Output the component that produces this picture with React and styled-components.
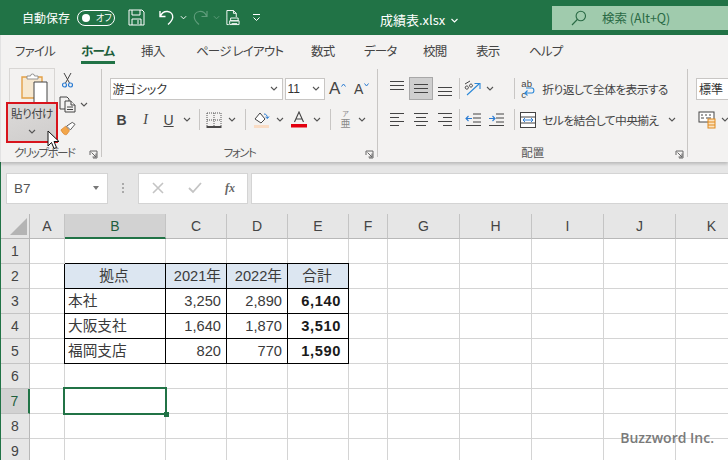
import React from "react";
import styled, { createGlobalStyle } from "styled-components";

const GREEN = "#217346";
const FONT = `"Liberation Sans", "Noto Sans CJK JP", sans-serif`;
const UI_FONT = `"Noto Sans CJK JP", "Liberation Sans", sans-serif`;

const GlobalStyle = createGlobalStyle`
  html, body {
    margin: 0;
    padding: 0;
    width: 728px;
    height: 460px;
    overflow: hidden;
    background: #fff;
  }
`;

const Page = styled.div`
  position: relative;
  width: 728px;
  height: 460px;
  overflow: hidden;
  font-family: ${UI_FONT};
  font-feature-settings: "palt";
`;

/* title bar */
const TitleBar = styled.div`
  height: 35px;
  background: ${GREEN};
  display: flex;
  align-items: center;
  color: #fff;
`;
const AutoSave = styled.span`
  font-size: 12px;
  margin-left: 22px;
  width: 55px;
  line-height: 35px;
`;
const Toggle = styled.div`
  box-sizing: border-box;
  width: 38px;
  height: 16px;
  border: 1px solid #fff;
  border-radius: 8px;
  display: flex;
  align-items: center;
  padding-left: 4px;
  gap: 6px;
  font-size: 9px;
  line-height: 1;
`;
const ToggleKnob = styled.i`
  width: 8px;
  height: 8px;
  border-radius: 50%;
  background: #fff;
`;
const QuickIcons = styled.div`
  display: flex;
  align-items: center;
  margin-left: 13px;
`;
const QuickSlot = styled.div`
  width: ${(p) => p.$w}px;
  display: flex;
  justify-content: center;
`;
const FileName = styled.div`
  position: absolute;
  left: 380px;
  top: 10px;
  font-size: 13px;
  line-height: 20px;
  display: flex;
  align-items: center;
  gap: 5px;
`;
const Search = styled.div`
  margin-left: auto;
  width: 176px;
  height: 24px;
  background: #a0cbad;
  display: flex;
  align-items: center;
  color: #2a6a45;
  font-size: 12.5px;
  padding-left: 19px;
  box-sizing: border-box;
  gap: 15px;
`;

/* tabs */
const Chrome = styled.div`
  background: #f3f2f1;
  border-left: 1px solid #e2e2e2;
  box-shadow: 0 2px 3px rgba(0, 0, 0, 0.2);
  position: relative;
  z-index: 2;
`;
const Tabs = styled.div`
  height: 30px;
  display: flex;
  padding-left: 14px;
  font-size: 12.5px;
  letter-spacing: -0.8px;
  line-height: 32px;
  color: #444;
`;
const Tab = styled.div`
  position: relative;
  width: ${(p) => p.$w}px;
  flex: none;
  white-space: nowrap;
  font-weight: ${(p) => (p.$active ? 700 : 400)};
  color: ${(p) => (p.$active ? "#1f5f3c" : "#444")};
  &::after {
    content: "";
    display: ${(p) => (p.$active ? "block" : "none")};
    position: absolute;
    left: 0;
    width: 34px;
    top: 26px;
    height: 2.5px;
    background: ${GREEN};
  }
`;

/* ribbon */
const Ribbon = styled.div`
  height: 97px;
  display: flex;
`;
const Group = styled.div`
  position: relative;
  box-sizing: border-box;
  width: ${(p) => p.$w}px;
  border-right: ${(p) => (p.$last ? "none" : "1px solid #c8c6c4")};
  margin-top: 4px;
  height: 88px;
`;
const GroupLabel = styled.div`
  position: absolute;
  left: 0;
  right: ${(p) => p.$right || 0}px;
  top: 75px;
  text-align: center;
  font-size: 11.5px;
  letter-spacing: ${(p) => (p.$tight ? "-1.5px" : "0")};
  line-height: 16px;
  color: #555;
`;
const Launcher = styled.svg`
  position: absolute;
  right: 3px;
  top: 81px;
`;
const ClipboardBody = styled.div`
  display: flex;
`;
const PasteColumn = styled.div`
  width: 52px;
  margin: -1px 0 0 5px;
  display: flex;
  flex-direction: column;
  align-items: center;
`;
const PasteTop = styled.div`
  box-sizing: border-box;
  width: 46px;
  height: 34px;
  border: 1px solid #d8d6d4;
  border-bottom: none;
  display: flex;
  justify-content: center;
  padding: 3px 0 0 5px;
`;
const PasteBottom = styled.div`
  box-sizing: border-box;
  width: 52px;
  height: 41px;
  border: 2px solid #d8141c;
  background: linear-gradient(160deg, #dcdad9, #cfcdcc);
  font-size: 11.5px;
  letter-spacing: -0.5px;
  line-height: 16px;
  color: #444;
  text-align: center;
  padding-top: 1px;
  white-space: nowrap;
`;
const ClipTools = styled.div`
  display: flex;
  flex-direction: column;
  margin: -1px 0 0 1px;
`;
const ClipTool = styled.div`
  height: 24px;
  display: flex;
  align-items: center;
  gap: 4px;
`;
const ClipIcon = styled.div`
  width: 17px;
  display: flex;
  justify-content: center;
`;
const Cursor = styled.svg`
  position: absolute;
  left: 46px;
  top: 61px;
`;

const RibbonRows = styled.div`
  display: flex;
  flex-direction: column;
  padding: 8px 0 0 ${(p) => p.$pad}px;
`;
const RibbonRow = styled.div`
  height: 23px;
  display: flex;
  align-items: center;
  margin-bottom: 8px;
`;
const Slot = styled.div`
  width: ${(p) => p.$w}px;
  height: 23px;
  flex: none;
  display: flex;
  align-items: center;
  justify-content: center;
  box-sizing: border-box;
  background: ${(p) => (p.$on ? "#cfcfcf" : "transparent")};
  border: ${(p) => (p.$on ? "1px solid #a8a8a8" : "none")};
  font-family: ${(p) => (p.$serif ? '"Liberation Serif", serif' : FONT)};
  font-weight: ${(p) => (p.$bold ? 700 : 400)};
  font-style: ${(p) => (p.$italic ? "italic" : "normal")};
  text-decoration: ${(p) => (p.$under ? "underline" : "none")};
  font-size: 14px;
  color: #444;
`;
const VSep = styled.div`
  width: 1px;
  height: 21px;
  flex: none;
  background: #c8c6c4;
  margin: 0 ${(p) => p.$m || 0}px;
`;
const Combo = styled.div`
  box-sizing: border-box;
  width: ${(p) => p.$w}px;
  height: 22px;
  flex: none;
  margin-right: 2px;
  background: #fff;
  border: 1px solid #c8c6c4;
  display: flex;
  align-items: center;
  justify-content: space-between;
  padding: 0 4px 0 2px;
  font-size: 12px;
  color: #333;
  font-family: ${FONT};
`;
const GrowA = styled.span`
  font-family: ${FONT};
  font-size: ${(p) => p.$size}px;
  color: #444;
  line-height: 1;
`;
const GrowMark = styled.svg`
  margin: -8px 0 0 1px;
  flex: none;
`;
const PhoneticMark = styled.div`
  display: flex;
  flex-direction: column;
  align-items: center;
  font-family: ${FONT};
  color: #8a8a8a;
  & > span:first-child {
    font-size: 7px;
    line-height: 8px;
  }
  & > span:last-child {
    font-size: 10px;
    line-height: 12px;
  }
`;
const TextAction = styled.div`
  font-size: 11.8px;
  letter-spacing: -0.65px;
  line-height: 23px;
  color: #444;
  white-space: nowrap;
  flex: none;
  margin-left: 4px;
`;
const WrapMark = styled.div`
  position: relative;
  width: 14px;
  font-family: ${FONT};
  font-size: 9.5px;
  line-height: 11px;
  color: #444;
  & > svg {
    position: absolute;
    left: 3px;
    top: 9px;
  }
`;

/* formula bar */
const FormulaBar = styled.div`
  height: 52px;
  background: #e6e6e6;
  border-left: 1px solid ${GREEN};
  display: flex;
  align-items: center;
  padding: 0 0 0 5px;
`;
const NameBox = styled.div`
  box-sizing: border-box;
  width: 102px;
  height: 31px;
  background: #fff;
  border: 1px solid #d4d4d4;
  display: flex;
  align-items: center;
  justify-content: space-between;
  padding: 0 8px 0 7px;
  font-family: ${FONT};
  font-size: 13.5px;
  color: #555;
`;
const Triangle = styled.i`
  border-left: 3.5px solid transparent;
  border-right: 3.5px solid transparent;
  border-top: 4px solid #777;
`;
const Grip = styled.div`
  width: 30px;
  display: flex;
  flex-direction: column;
  align-items: center;
  gap: 2px;
  & > i {
    width: 2px;
    height: 2px;
    background: #aaa;
  }
`;
const FxBox = styled.div`
  box-sizing: border-box;
  width: 110px;
  height: 31px;
  background: #fff;
  border: 1px solid #d4d4d4;
  display: flex;
  align-items: center;
  justify-content: space-between;
  padding: 0 12px 0 13px;
`;
const FxLabel = styled.span`
  font-family: "Liberation Serif", serif;
  font-style: italic;
  font-weight: 700;
  font-size: 12px;
  color: #666;
`;
const FormulaInput = styled.div`
  box-sizing: border-box;
  flex: 1;
  margin-left: 3px;
  height: 31px;
  background: #fff;
  border: 1px solid #d4d4d4;
  border-right: none;
`;

/* sheet */
const Sheet = styled.div`
  border-left: 1px solid ${GREEN};
  display: grid;
  grid-template-columns: 29px 35px 101px 61px 61px 61px 39px 72px 72px 72px 72px 72px;
  grid-template-rows: 25px repeat(9, 25px);
  font-family: ${FONT};
  background: #fff;
`;
const Corner = styled.div`
  background: #e6e6e6;
  border-right: 1px solid #b8b8b8;
  border-bottom: 1px solid #b8b8b8;
  display: flex;
  align-items: flex-end;
  justify-content: flex-end;
  padding: 0 2px 3px 0;
`;
const ColHead = styled.div`
  box-sizing: border-box;
  background: ${(p) => (p.$on ? "#d2d2d2" : "#e6e6e6")};
  border-right: 1px solid #c4c4c4;
  border-bottom: ${(p) => (p.$on ? `2px solid ${GREEN}` : "1px solid #b8b8b8")};
  display: flex;
  align-items: center;
  justify-content: center;
  font-size: 14px;
  color: ${(p) => (p.$on ? "#1f5f3c" : "#444")};
`;
const RowHead = styled.div`
  box-sizing: border-box;
  background: ${(p) => (p.$on ? "#d2d2d2" : "#e6e6e6")};
  border-right: ${(p) => (p.$on ? `2px solid ${GREEN}` : "1px solid #b8b8b8")};
  border-bottom: 1px solid #c4c4c4;
  display: flex;
  align-items: center;
  justify-content: center;
  font-size: 14px;
  color: ${(p) => (p.$on ? "#1f5f3c" : "#444")};
`;
const Cell = styled.div`
  box-sizing: border-box;
  min-width: 0;
  border-right: 1px solid #d4d4d4;
  border-bottom: 1px solid #d4d4d4;
`;
const DataCell = styled.div`
  box-sizing: border-box;
  min-width: 0;
  border-right: 1px solid #000;
  border-bottom: 1px solid #000;
  box-shadow: -1px 0 0 #000, 0 -1px 0 #000;
  background: ${(p) => (p.$head ? "#dce6f1" : "#fff")};
  text-align: ${(p) => p.$align};
  font-weight: ${(p) => (p.$bold ? 700 : 400)};
  font-feature-settings: normal;
  font-size: 14.67px;
  letter-spacing: ${(p) => (p.$bold ? "0.6px" : "0")};
  line-height: 24px;
  padding: 0 ${(p) => (p.$bold ? 7 : 5)}px 0 3px;
  color: ${(p) => (p.$bold ? "#1a1a1a" : "#3a3a3a")};
  white-space: nowrap;
`;
const SelectedCell = styled(Cell)`
  position: relative;
  &::before {
    content: "";
    position: absolute;
    left: -2px;
    top: -2px;
    right: -2px;
    bottom: -2px;
    border: 2px solid ${GREEN};
  }
  &::after {
    content: "";
    position: absolute;
    right: -4px;
    bottom: -4px;
    width: 5px;
    height: 5px;
    background: ${GREEN};
  }
`;
const Watermark = styled.div`
  position: absolute;
  right: 14px;
  bottom: 13px;
  font-family: "Open Sans", sans-serif;
  font-weight: 600;
  font-size: 14px;
  line-height: 18px;
  color: #7a7a7a;
`;

const Chevron = ({ color = "#555", w = 8 }) => (
  <svg width={w} height="5" viewBox="0 0 8 5" style={{ flex: "none" }}>
    <path d="M1 1l3 3 3-3" fill="none" stroke={color} strokeWidth="1.1" />
  </svg>
);

const SaveIcon = () => (
  <svg width="17" height="17" viewBox="0 0 17 17" fill="none" stroke="#fff" strokeWidth="1">
    <path d="M1 1h13l2 2v13H1z" />
    <path d="M4 1v5h8V1M4 16v-6h9v6M10 11v4" />
  </svg>
);
const UndoIcon = ({ color = "#fff" }) => (
  <svg width="16" height="17" viewBox="0 0 16 17" fill="none" stroke={color} strokeWidth="1.4">
    <path d="M1 2v5.5h5.5M1.5 7C3 3.5 5.5 2.2 8.5 2.5c3.5.4 5.5 3 5.2 6-.3 3-2.4 5-4.7 7" />
  </svg>
);
const RedoIcon = () => (
  <svg width="16" height="17" viewBox="0 0 16 17" fill="none" stroke="#5f9c7b" strokeWidth="1.2">
    <path d="M15 2v5.5H9.5M14.5 7C13 3.5 10.5 2.2 7.5 2.5c-3.5.4-5.5 3-5.2 6 .3 3 2.4 5 4.7 7" />
  </svg>
);
const PreviewIcon = () => (
  <svg width="16" height="18" viewBox="0 0 16 18" fill="none" stroke="#fff" strokeWidth="1">
    <path d="M2 8V1h7l3 3v4M9 1v3h3" />
    <path d="M2 8v8h2M6 9h8v3H6zM5 12h10v4H5zM7 15h6" />
  </svg>
);
const CustomizeIcon = () => (
  <svg width="9" height="9" viewBox="0 0 9 9" fill="none" stroke="#fff" strokeWidth="1">
    <path d="M1 1.5h7M1.5 4.5l3 3 3-3" />
  </svg>
);
const SearchIcon = () => (
  <svg width="16" height="16" viewBox="0 0 16 16" fill="none" stroke="#2a6a45" strokeWidth="1.1">
    <circle cx="9.8" cy="6" r="4.7" />
    <path d="M6.3 9.5L1 15" />
  </svg>
);

const PasteIcon = () => (
  <svg width="30" height="31" viewBox="0 0 30 31">
    <path d="M2 26V5h20v21z" fill="#f7e8cf" stroke="#e3a046" strokeWidth="1.4" />
    <path d="M7 7V4h3.5a2 2 0 0 1 4 0H18v3z" fill="#fff" stroke="#8a8a8a" strokeWidth="0.9" />
    <path d="M14 10h13v21H14z" fill="#fff" stroke="#444" strokeWidth="1" />
  </svg>
);
const ScissorsIcon = () => (
  <svg width="11" height="16" viewBox="0 0 11 16" fill="none">
    <path d="M2 1l5.500 10M9 1L3.500 11" stroke="#444" strokeWidth="1" />
    <circle cx="2.500" cy="13" r="2" stroke="#2b7cd3" strokeWidth="1.2" />
    <circle cx="8.500" cy="13" r="2" stroke="#2b7cd3" strokeWidth="1.2" />
  </svg>
);
const CopyIcon = () => (
  <svg width="17" height="17" viewBox="0 0 17 17" fill="#f3f2f1" stroke="#444" strokeWidth="1">
    <path d="M1 1h7l2 2v10H1z" />
    <path d="M6 5h6l4 4v7H6z" />
    <path d="M12 5v4h4M8 11h6M8 13.500h6" />
  </svg>
);
const BrushIcon = () => (
  <svg width="16" height="15" viewBox="0 0 17 15">
    <path d="M1 9l5-4 4 5-3 4c-2 .5-4-1-6-5z" fill="#f2a64a" stroke="#d9822b" strokeWidth="0.8" />
    <path d="M7 5l6-4 3 2-5 6z" fill="#fff" stroke="#555" strokeWidth="1" />
  </svg>
);

const BorderIcon = () => (
  <svg width="16" height="16" viewBox="0 0 16 16" fill="none">
    <path d="M1 1h14M1 1v14M15 1v14M8 1v14M1 8h14" stroke="#555" strokeWidth="1" strokeDasharray="1 1" />
    <path d="M0.500 15h15" stroke="#000" strokeWidth="1.400" />
  </svg>
);
const FillIcon = () => (
  <svg width="17" height="17" viewBox="0 0 17 17" fill="none">
    <path d="M2 8l5-6 5 6-4 4z" stroke="#444" strokeWidth="1" fill="#fff" />
    <path d="M11 3c2 0 3 1 3.500 4M12.500 6l2 1.500L16 5.500" stroke="#2b7cd3" strokeWidth="1" />
    <rect x="1" y="14" width="15" height="3" fill="#f9dcc4" />
  </svg>
);
const FontColorIcon = () => (
  <svg width="16" height="17" viewBox="0 0 16 17" fill="none">
    <path d="M3.500 11L8 1l4.500 10M5 8h6" stroke="#444" strokeWidth="1.100" />
    <rect x="0" y="13" width="16" height="3.500" fill="#e3000f" />
  </svg>
);
const AlignLines = ({ rows, y }) => (
  <svg width="16" height="16" viewBox="0 0 16 16" fill="none" stroke="#444" strokeWidth="1">
    {rows.map(([x1, x2], i) => (
      <path key={i} d={`M${x1} ${y + i * 4 + 0.5}H${x2}`} />
    ))}
  </svg>
);
const OrientIcon = () => (
  <svg width="18" height="17" viewBox="0 0 18 17" fill="none">
    <path d="M1 4l5-3M4 6.500a1.600 1.600 0 1 1-.1-.1M8 4.500a1.500 1.500 0 1 0 .1.1" stroke="#444" strokeWidth="1" />
    <path d="M3 15L15 4M10.500 3.500H16V9" stroke="#2b88d8" strokeWidth="1.100" />
  </svg>
);
const IndentIcon = ({ flip }) => (
  <svg width="16" height="14" viewBox="0 0 16 14" fill="none">
    <path d="M8 1.500h8M8 5.500h8M8 9.500h8M1 13h15" stroke="#444" strokeWidth="1" transform="translate(0 -0.500)" />
    <path
      d={flip ? "M1 5.500h6M4.500 3l2.500 2.500-2.500 2.500" : "M1 5.500h6M3.500 3L1 5.500 3.500 8"}
      stroke="#2b7cd3"
      strokeWidth="1.100"
    />
  </svg>
);
const MergeIcon = () => (
  <svg width="16" height="16" viewBox="0 0 16 16" fill="#fff">
    <rect x="0.500" y="0.500" width="15" height="15" stroke="#444" />
    <path d="M0 5h16M0 11h16" stroke="#444" />
    <path d="M3 8h10M5 6l-2 2 2 2M11 6l2 2-2 2" stroke="#2b7cd3" fill="none" />
  </svg>
);
const StyleIcon = () => (
  <svg width="19" height="18" viewBox="0 0 19 18">
    <rect x="1" y="1" width="15" height="10" fill="#fff" stroke="#444" />
    <path d="M3 4h2M7 4h2M11 4h2M3 7h3M8 7h5" stroke="#444" />
    <rect x="10" y="8" width="7" height="9" fill="#fbe3c0" stroke="#e08a1e" />
    <path d="M10 11h7M10 14h7" stroke="#e08a1e" />
  </svg>
);
const LauncherIcon = () => (
  <Launcher width="9" height="9" viewBox="0 0 9 9" fill="none" stroke="#666" strokeWidth="1">
    <path d="M1 5V1h7v7H4M2.500 2.500L7 7M7 3.500V7H3.500" />
  </Launcher>
);

const tabs = [
  ["ファイル", 66],
  ["ホーム", 60],
  ["挿入", 55],
  ["ページ レイアウト", 115],
  ["数式", 53],
  ["データ", 59],
  ["校閲", 53],
  ["表示", 53],
  ["ヘルプ", 40],
];
const columns = ["A", "B", "C", "D", "E", "F", "G", "H", "I", "J", "K"];
const table = {
  2: ["拠点", "2021年", "2022年", "合計"],
  3: ["本社", "3,250", "2,890", "6,140"],
  4: ["大阪支社", "1,640", "1,870", "3,510"],
  5: ["福岡支店", "820", "770", "1,590"],
};
const rowNumbers = [1, 2, 3, 4, 5, 6, 7, 8, 9];

const renderRow = (row) => {
  const values = table[row];
  return (
    <React.Fragment key={row}>
      <RowHead $on={row === 7}>{row}</RowHead>
      {columns.map((col, i) => {
        const idx = i - 1;
        if (values && idx >= 0 && idx < 4) {
          const head = row === 2;
          const align = head ? (idx === 0 || idx === 3 ? "center" : "right") : idx === 0 ? "left" : "right";
          return (
            <DataCell key={col} $head={head} $align={align} $bold={!head && idx === 3}>
              {values[idx]}
            </DataCell>
          );
        }
        if (row === 7 && col === "B") return <SelectedCell key={col} />;
        return <Cell key={col} />;
      })}
    </React.Fragment>
  );
};

export default function App() {
  return (
    <Page>
      <GlobalStyle />
      <TitleBar>
        <AutoSave>自動保存</AutoSave>
        <Toggle>
          <ToggleKnob />
          オフ
        </Toggle>
        <QuickIcons>
          <QuickSlot $w={17}><SaveIcon /></QuickSlot>
          <QuickSlot $w={14} />
          <QuickSlot $w={16}><UndoIcon /></QuickSlot>
          <QuickSlot $w={17}><Chevron color="#fff" w={7} /></QuickSlot>
          <QuickSlot $w={16}><RedoIcon /></QuickSlot>
          <QuickSlot $w={17}><Chevron color="#5f9c7b" w={7} /></QuickSlot>
          <QuickSlot $w={15}><PreviewIcon /></QuickSlot>
          <QuickSlot $w={33}><CustomizeIcon /></QuickSlot>
        </QuickIcons>
        <FileName>
          成績表.xlsx
          <Chevron color="#fff" w={9} />
        </FileName>
        <Search>
          <SearchIcon />
          <span>検索 (Alt+Q)</span>
        </Search>
      </TitleBar>

      <Chrome>
        <Tabs>
          {tabs.map(([label, w]) => (
            <Tab key={label} $w={w} $active={label === "ホーム"}>{label}</Tab>
          ))}
        </Tabs>
        <Ribbon>
          <Group $w={101}>
            <ClipboardBody>
              <PasteColumn>
                <PasteTop><PasteIcon /></PasteTop>
                <PasteBottom>
                  貼り付け
                  <br />
                  <Chevron />
                </PasteBottom>
              </PasteColumn>
              <ClipTools>
                <ClipTool><ClipIcon><ScissorsIcon /></ClipIcon></ClipTool>
                <ClipTool><ClipIcon><CopyIcon /></ClipIcon><Chevron /></ClipTool>
                <ClipTool><ClipIcon><BrushIcon /></ClipIcon></ClipTool>
              </ClipTools>
            </ClipboardBody>
            <GroupLabel $right={13} $tight>クリップボード</GroupLabel>
            <LauncherIcon />
            <Cursor width="13" height="20" viewBox="0 0 13 20">
              <path d="M1 1v15l3.500-3.500 2.500 6 2.500-1-2.500-6h5z" fill="#fff" stroke="#111" strokeWidth="1" />
            </Cursor>
          </Group>

          <Group $w={278}>
            <RibbonRows $pad={8}>
              <RibbonRow>
                <Combo $w={173}>游ゴシック<Chevron /></Combo>
                <Combo $w={40}>11<Chevron /></Combo>
                <Slot $w={22}>
                  <GrowA $size={17}>A</GrowA>
                  <GrowMark width="5" height="4" viewBox="0 0 5 4" fill="none" stroke="#2b7cd3">
                    <path d="M0.500 3.500l2-2.500 2 2.500" />
                  </GrowMark>
                </Slot>
                <Slot $w={26}>
                  <GrowA $size={14}>A</GrowA>
                  <GrowMark width="5" height="4" viewBox="0 0 5 4" fill="none" stroke="#2b7cd3">
                    <path d="M0.500 0.500l2 2.500 2-2.500" />
                  </GrowMark>
                </Slot>
              </RibbonRow>
              <RibbonRow>
                <Slot $w={24} $bold>B</Slot>
                <Slot $w={24} $italic $serif>I</Slot>
                <Slot $w={22} $under>U</Slot>
                <Slot $w={14}><Chevron /></Slot>
                <VSep $m={5} />
                <Slot $w={18}><BorderIcon /></Slot>
                <Slot $w={18}><Chevron /></Slot>
                <VSep $m={4} />
                <Slot $w={24}><FillIcon /></Slot>
                <Slot $w={12}><Chevron /></Slot>
                <Slot $w={26}><FontColorIcon /></Slot>
                <Slot $w={10}><Chevron /></Slot>
                <VSep $m={8} />
                <Slot $w={14}>
                  <PhoneticMark>
                    <span>ア</span>
                    <span>亜</span>
                  </PhoneticMark>
                </Slot>
                <Slot $w={18}><Chevron /></Slot>
              </RibbonRow>
            </RibbonRows>
            <GroupLabel $tight>フォント</GroupLabel>
            <LauncherIcon />
          </Group>

          <Group $w={311}>
            <RibbonRows $pad={7}>
              <RibbonRow>
                <Slot $w={24}><AlignLines y={0} rows={[[1, 15], [1, 15], [1, 15]]} /></Slot>
                <Slot $w={24} $on><AlignLines y={3} rows={[[1, 15], [1, 15], [1, 15]]} /></Slot>
                <Slot $w={24}><AlignLines y={6} rows={[[1, 15], [1, 15], [1, 15]]} /></Slot>
                <VSep $m={2} />
                <Slot $w={22}><OrientIcon /></Slot>
                <Slot $w={11}><Chevron /></Slot>
                <Slot $w={16} />
                <VSep $m={3} />
                <Slot $w={20}>
                  <WrapMark>
                    ab
                    <br />
                    c
                    <svg width="11" height="10" viewBox="0 0 11 10" fill="none" stroke="#2b88d8" strokeWidth="1.100">
                      <path d="M2 1h6c2.500 0 2.500 5 0 5H1M3.500 3.500L1 6l2.500 2.500" />
                    </svg>
                  </WrapMark>
                </Slot>
                <TextAction>折り返して全体を表示する</TextAction>
              </RibbonRow>
              <RibbonRow>
                <Slot $w={24}><AlignLines y={1} rows={[[1, 15], [1, 10], [1, 15], [1, 10]]} /></Slot>
                <Slot $w={24}><AlignLines y={1} rows={[[1, 15], [3, 13], [1, 15], [3, 13]]} /></Slot>
                <Slot $w={24}><AlignLines y={1} rows={[[1, 15], [6, 15], [1, 15], [6, 15]]} /></Slot>
                <VSep $m={2} />
                <Slot $w={22}><IndentIcon /></Slot>
                <Slot $w={23}><IndentIcon flip /></Slot>
                <Slot $w={4} />
                <VSep $m={3} />
                <Slot $w={20}><MergeIcon /></Slot>
                <TextAction>セルを結合して中央揃え</TextAction>
                <Slot $w={26}><Chevron /></Slot>
              </RibbonRow>
            </RibbonRows>
            <GroupLabel>配置</GroupLabel>
            <LauncherIcon />
          </Group>

          <Group $w={40} $last>
            <RibbonRows $pad={8}>
              <RibbonRow>
                <Combo $w={60}>標準</Combo>
              </RibbonRow>
              <RibbonRow>
                <Slot $w={22}><StyleIcon /></Slot>
                <Slot $w={14}><Chevron /></Slot>
              </RibbonRow>
            </RibbonRows>
          </Group>
        </Ribbon>
      </Chrome>

      <FormulaBar>
        <NameBox>
          B7
          <Triangle />
        </NameBox>
        <Grip><i /><i /><i /></Grip>
        <FxBox>
          <svg width="12" height="12" viewBox="0 0 12 12" fill="none" stroke="#c4c4c4" strokeWidth="1.600">
            <path d="M1 1l10 10M11 1L1 11" />
          </svg>
          <svg width="14" height="12" viewBox="0 0 14 12" fill="none" stroke="#c4c4c4" strokeWidth="1.800">
            <path d="M1 6l4 4 8-9" />
          </svg>
          <FxLabel>fx</FxLabel>
        </FxBox>
        <FormulaInput />
      </FormulaBar>

      <Sheet>
        <Corner>
          <svg width="17" height="17" viewBox="0 0 17 17"><path d="M17 0v17H0z" fill="#b4b4b4" /></svg>
        </Corner>
        {columns.map((col) => (
          <ColHead key={col} $on={col === "B"}>{col}</ColHead>
        ))}
        {rowNumbers.map(renderRow)}
      </Sheet>
      <Watermark>Buzzword Inc.</Watermark>
    </Page>
  );
}
